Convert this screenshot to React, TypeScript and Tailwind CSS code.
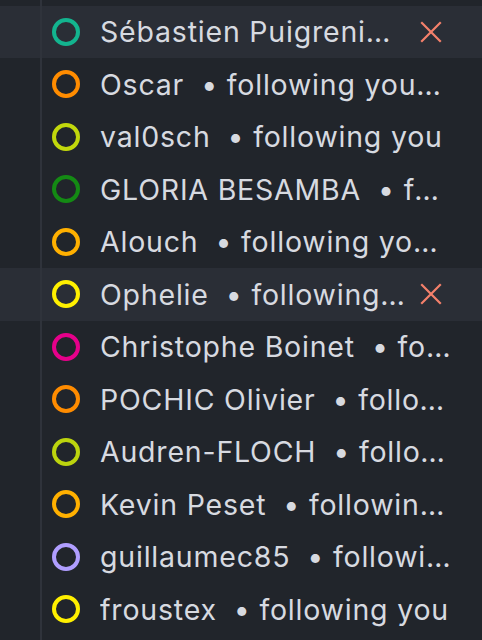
type Participant = {
  name: string;
  ring: string;
  note?: string;
  active?: boolean;
};

const participants: Participant[] = [
  { name: 'Sébastien Puigrenimont', ring: 'border-[#13b48f]', active: true },
  { name: 'Oscar', ring: 'border-[#ff8c00]', note: 'following youaway' },
  { name: 'val0sch', ring: 'border-[#c2d80c]', note: 'following you' },
  { name: 'GLORIA BESAMBA', ring: 'border-[#148a14]', note: 'following you' },
  { name: 'Alouch', ring: 'border-[#ffb000]', note: 'following you (away)' },
  { name: 'Ophelie', ring: 'border-[#fff000]', note: 'following you', active: true },
  { name: 'Christophe Boinet', ring: 'border-[#e6008a]', note: 'following you' },
  { name: 'POCHIC Olivier', ring: 'border-[#ff8c00]', note: 'following you' },
  { name: 'Audren-FLOCH', ring: 'border-[#bcd40e]', note: 'following you' },
  { name: 'Kevin Peset', ring: 'border-[#ffb000]', note: 'following you' },
  { name: 'guillaumec85', ring: 'border-[#b09eff]', note: 'following you' },
  { name: 'froustex', ring: 'border-[#fff000]', note: 'following you' },
];

function CloseIcon() {
  return (
    <svg width="22" height="22" viewBox="0 0 22 22" fill="none" stroke="#f4806b" strokeWidth="2.2" strokeLinecap="square">
      <path d="M2 2 L20 20 M20 2 L2 20" />
    </svg>
  );
}

function Row({ p }: { p: Participant }) {
  return (
    <div className={`flex h-[52.5px] ${p.active ? 'bg-[#2a2e36]' : ''}`}>
      {/* indent guide */}
      <div className="w-10 shrink-0" />
      <div className="flex min-w-0 flex-1 items-center border-l-2 border-[#2f333b] pl-[10px] pr-[27px]">
        <span className={`h-[28px] w-[28px] shrink-0 rounded-full border-[4px] ${p.ring}`} />
        <span className="ml-[20px] min-w-0 flex-1 truncate text-[28.5px] leading-[1.3] tracking-[0.8px] text-[#d7dae0]">
          {p.name}
          {p.note && <span className="ml-[17px]">• {p.note}</span>}
        </span>
        {p.active && (
          <span className="mr-[4px] flex w-[40px] shrink-0 items-center justify-center">
            <CloseIcon />
          </span>
        )}
      </div>
    </div>
  );
}

export default function App() {
  return (
    <div
      className="h-[640px] w-[482px] overflow-hidden bg-[#21252b]"
      style={{ fontFamily: 'Inter, "Noto Sans", sans-serif' }}
    >
      <div className="flex h-[5.5px]">
        <div className="w-10 shrink-0" />
        <div className="flex-1 border-l-2 border-[#2f333b]" />
      </div>
      {participants.map((p) => (
        <Row key={p.name} p={p} />
      ))}
      <div className="flex h-[10px]">
        <div className="w-10 shrink-0" />
        <div className="flex-1 border-l-2 border-[#2f333b]" />
      </div>
    </div>
  );
}
